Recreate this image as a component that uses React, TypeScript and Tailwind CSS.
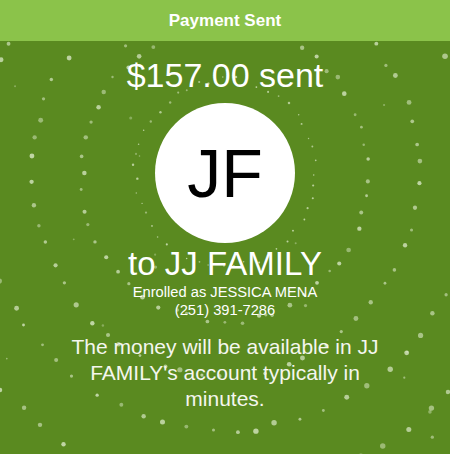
import React from "react";

type Dot = { x: number; y: number; r: number; o: number };

// bokeh rings of dots around the avatar
function makeDots(): Dot[] {
  let seed = 7;
  const rand = () => {
    seed = (seed * 16807) % 2147483647;
    return (seed - 1) / 2147483646;
  };
  const cx = 225;
  const cy = 132;
  const rings = [
    { r: 90, size: 0.9, gap: 12 },
    { r: 143, size: 1.7, gap: 17 },
    { r: 194, size: 1.9, gap: 21 },
    { r: 248, size: 2.0, gap: 24 },
    { r: 305, size: 2.1, gap: 28 },
    { r: 365, size: 2.2, gap: 32 },
  ];
  const dots: Dot[] = [];
  rings.forEach((ring) => {
    const n = Math.round((2 * Math.PI * ring.r) / ring.gap);
    const off = rand() * Math.PI * 2;
    for (let i = 0; i < n; i++) {
      const a = off + (i / n) * Math.PI * 2 + (rand() - 0.5) * 0.05;
      const rr = ring.r + (rand() - 0.5) * 6;
      dots.push({
        x: cx + Math.cos(a) * rr,
        y: cy + Math.sin(a) * rr * 1.04,
        r: ring.size * (0.7 + rand() * 0.7),
        o: 0.45 + rand() * 0.3,
      });
    }
  });
  for (let i = 0; i < 18; i++) {
    dots.push({
      x: rand() * 450,
      y: rand() * 413,
      r: 0.8 + rand() * 1.0,
      o: 0.3 + rand() * 0.3,
    });
  }
  return dots;
}

const dots = makeDots();

export default function App() {
  return (
    <div
      className="w-[450px] h-[454px] flex flex-col overflow-hidden"
      style={{ fontFamily: '"Liberation Sans", Arial, sans-serif' }}
    >
      <div className="h-[41px] shrink-0 bg-[#8bc34a] flex items-center justify-center">
        <span className="text-white font-bold text-[17px] leading-none">Payment Sent</span>
      </div>

      <div className="relative flex-1 bg-[#5a8a20] overflow-hidden">
        <svg className="absolute inset-0" width="450" height="413">
          {dots.map((d, i) => (
            <circle key={i} cx={d.x} cy={d.y} r={d.r} fill="#e3efd2" opacity={d.o} />
          ))}
        </svg>

        <div className="relative flex flex-col items-center text-white pt-[17px]">
          <div className="text-[34px] leading-[34px]">$157.00 sent</div>

          <div className="mt-[11px] w-[140px] h-[140px] rounded-full bg-white flex items-center justify-center">
            <span className="text-black text-[68px] leading-none">JF</span>
          </div>

          <div className="mt-[4px] text-[33px] leading-[33px]">to JJ FAMILY</div>
          <div className="mt-[3px] text-[14.7px] leading-[18px]">Enrolled as JESSICA MENA</div>
          <div className="text-[14.7px] leading-[18px]">(251) 391-7286</div>

          <p className="mt-[15px] px-[60px] text-center text-[21px] leading-[26px] text-[#f4f6ee]">
            The money will be available in JJ FAMILY's account typically in minutes.
          </p>
        </div>
      </div>
    </div>
  );
}
